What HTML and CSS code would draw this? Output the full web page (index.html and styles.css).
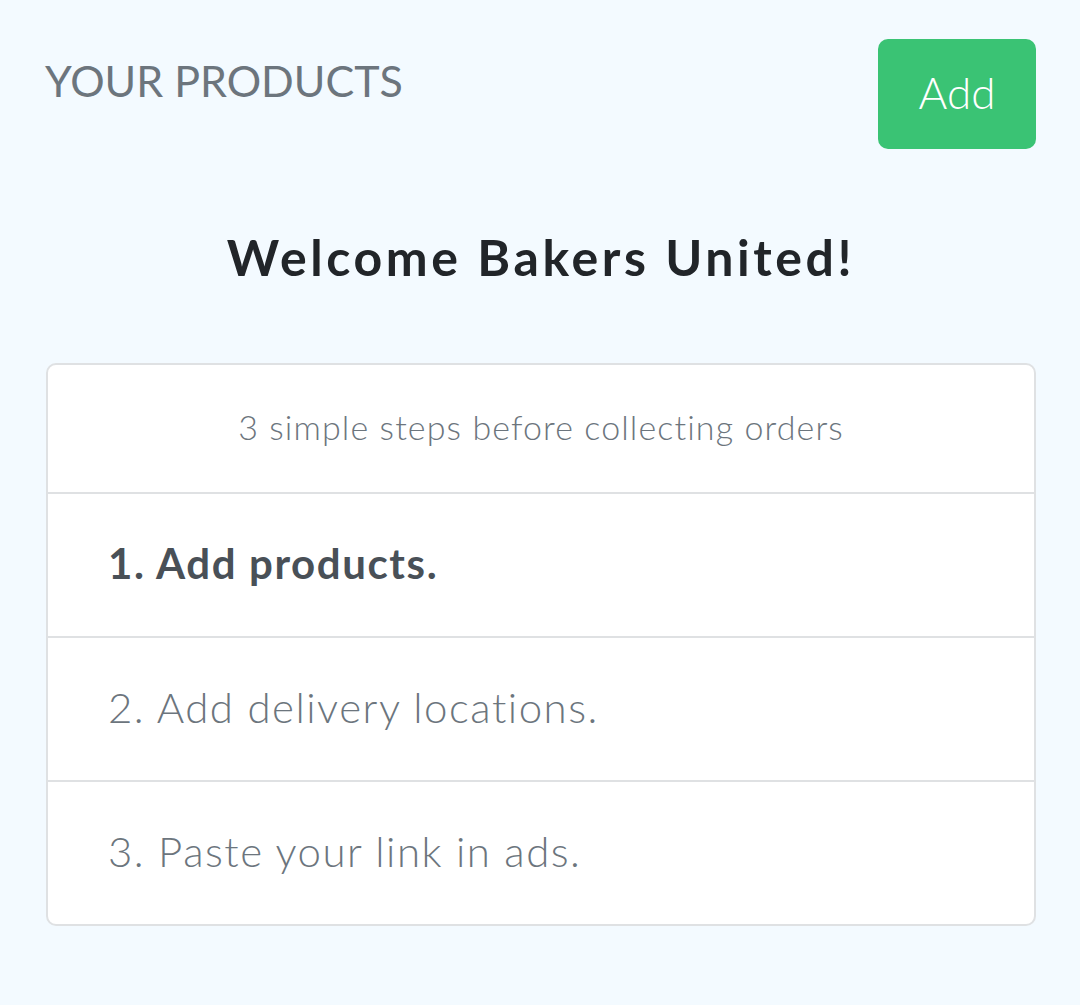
FILE: index.html
```html
<!DOCTYPE html>
<html>
<head>
<meta charset="utf-8">
<link rel="stylesheet" href="styles.css">
</head>
<body>
<div class="page">
  <header class="top">
    <h2 class="title">YOUR PRODUCTS</h2>
    <button class="btn-add">Add</button>
  </header>
  <h1 class="welcome">Welcome Bakers United!</h1>
  <ul class="steps">
    <li class="steps-head">3 simple steps before collecting orders</li>
    <li class="step step-active">1. Add products.</li>
    <li class="step">2. Add delivery locations.</li>
    <li class="step">3. Paste your link in ads.</li>
  </ul>
</div>
</body>
</html>
```
FILE: styles.css
```css
html, body {
  margin: 0;
  padding: 0;
  background: #f3faff;
}
body {
  font-family: Lato, "Noto Sans", sans-serif;
  color: #6c757d;
}
.page {
  padding: 39px 44px 0 46px;
}
.top {
  display: flex;
  justify-content: space-between;
  align-items: flex-start;
}
.title {
  margin: 16px 0 0 -1px;
  font-size: 43px;
  font-weight: 400;
  line-height: 52px;
  color: #6c757d;
}
.btn-add {
  width: 158px;
  height: 110px;
  border: none;
  border-radius: 10px;
  background: #3ac374;
  color: #fff;
  font-family: inherit;
  font-size: 44px;
  font-weight: 300;
  padding: 0 0 4px 0;
}
.welcome {
  margin: 78px 0 0 0;
  text-align: center;
  font-size: 50px;
  font-weight: 700;
  line-height: 60px;
  letter-spacing: 3.6px;
  color: #212529;
}
.steps {
  list-style: none;
  margin: 76px 0 0 0;
  padding: 0;
  background: #fff;
  border: 2px solid #dfe1e3;
  border-radius: 10px;
}
.steps-head {
  text-align: center;
  font-size: 34px;
  font-weight: 300;
  line-height: 40px;
  letter-spacing: 1.1px;
  padding: 42px 20px 45px;
  color: #6c757d;
}
.step {
  border-top: 2px solid #dfe1e3;
  padding: 36px 60px 40px;
  font-size: 42px;
  line-height: 66px;
  font-weight: 300;
  letter-spacing: 1.5px;
  color: #6c757d;
}
.step-active {
  font-weight: 700;
  letter-spacing: 1.6px;
  color: #495057;
}
```
